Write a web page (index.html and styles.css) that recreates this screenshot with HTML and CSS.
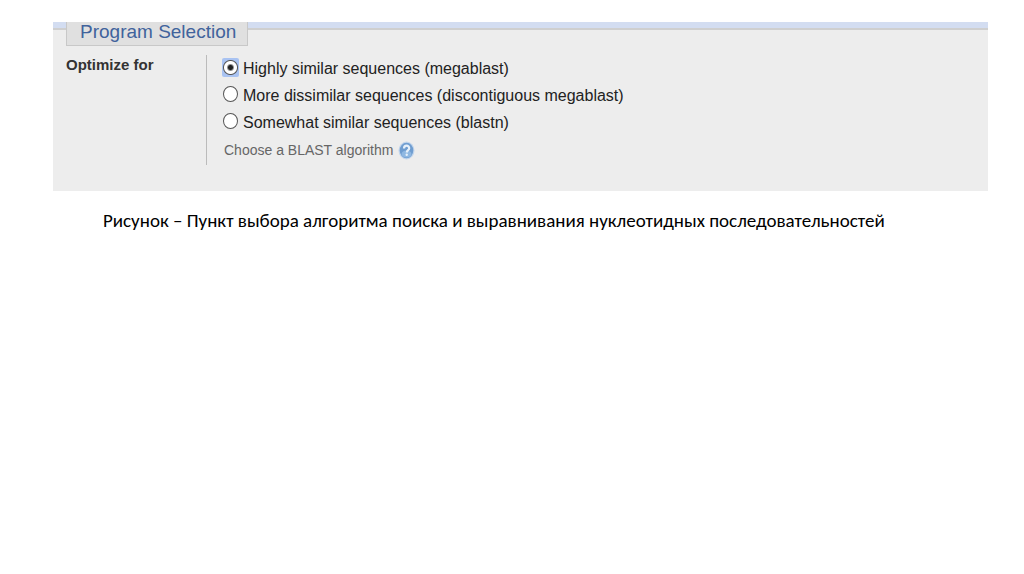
FILE: index.html
```html
<!DOCTYPE html>
<html lang="ru">
<head>
  <meta charset="UTF-8">
  <meta name="viewport" content="width=device-width, initial-scale=1.0">
  <title>Program Selection</title>
  <link rel="stylesheet" href="styles.css">
</head>

<body>

  <figure class="slide">
    <form class="panel">
      <div class="panel-head">
        <h2 class="panel-title">Program Selection</h2>
      </div>

      <div class="row" role="radiogroup" aria-labelledby="optimize">
        <div class="row-label" id="optimize">Optimize for</div>
        <div class="options">
          <label class="option"><input type="radio" name="program" value="megablast" checked>Highly similar sequences (megablast)</label>
          <label class="option"><input type="radio" name="program" value="discontiguous">More dissimilar sequences (discontiguous megablast)</label>
          <label class="option"><input type="radio" name="program" value="blastn">Somewhat similar sequences (blastn)</label>
          <div class="hint">
            <span>Choose a BLAST algorithm</span>
            <a class="help" href="#" aria-label="Help">
              <svg width="17" height="19" viewBox="0 0 17 19">
                <ellipse cx="8.5" cy="9.5" rx="8" ry="9" fill="#c3d6ec"/>
                <ellipse cx="8.5" cy="9.5" rx="6.8" ry="7.8" fill="#6f9dd0"/>
                <ellipse cx="8.5" cy="13" rx="5" ry="3.6" fill="#8fb8e2"/>
                <path d="M6 7.6c0-3.8 5.2-3.8 5.2-.4 0 2-2.4 2-2.4 4.2" fill="none" stroke="#e6f0fa" stroke-width="2.2"/>
                <circle cx="8.7" cy="13.8" r="1.2" fill="#e6f0fa"/>
              </svg>
            </a>
          </div>
        </div>
      </div>
    </form>

    <figcaption class="caption">Рисунок – Пункт выбора алгоритма поиска и выравнивания нуклеотидных последовательностей</figcaption>
  </figure>

</body>
</html>
```
FILE: styles.css
```css
body {
  margin: 0;
  background-color: #fff;
  font-family: "Liberation Sans", Arial, sans-serif;
  font-size: 16px;
  color: #222;
}
.slide {
  margin: 0;
  padding: 22px 36px 0 53px;
}
.panel {
  background-color: #ededed;
  padding-bottom: 26px;
}
/* blue strip with the title tab hanging from it */
.panel-head {
  height: 6px;
  background-color: #d3ddf1;
  border-bottom: 2px solid #cfcfcf;
  padding-left: 13px;
}
.panel-title {
  box-sizing: border-box;
  width: 182px;
  height: 24px;
  margin: 0;
  padding-left: 13px;
  background-color: #e0e0e0;
  border: 1px solid #c8c8c8;
  border-top: 0;
  font-size: 19px;
  line-height: 20px;
  font-weight: normal;
  color: #41639c;
  white-space: nowrap;
}
.row {
  display: flex;
  padding: 25px 13px 0;
}
.row-label {
  width: 140px;
  font-size: 15px;
  line-height: 20px;
  font-weight: bold;
  color: #333;
}
.options {
  border-left: 1px solid #bbb;
  padding-left: 16px;
}
.option {
  display: flex;
  align-items: center;
  gap: 5px;
  line-height: 27px;
}
.option input {
  appearance: none;
  box-sizing: border-box;
  width: 15px;
  height: 16px;
  margin: 0 0 3px;
  border: 1px solid #555;
  border-radius: 50%;
  background-color: #fff;
}
/* square focus glow behind the selected radio */
.option input:checked {
  width: 17px;
  height: 19px;
  margin: 0 -1px 3px;
  border: 0;
  border-radius: 2px;
  background: radial-gradient(circle, #222 2px, #fff 4px, #fff 6px, #555 7px, #a9c3f2 8px);
}
.hint {
  display: flex;
  align-items: center;
  gap: 5px;
  padding-left: 1px;
  font-size: 14px;
  line-height: 29px;
  color: #666;
}
.help {
  display: flex;
}
.caption {
  margin: 18px 50px 0;
  font-family: Carlito, Calibri, Lato, sans-serif;
  font-size: 19px;
  line-height: 24px;
  color: #000;
}
```
